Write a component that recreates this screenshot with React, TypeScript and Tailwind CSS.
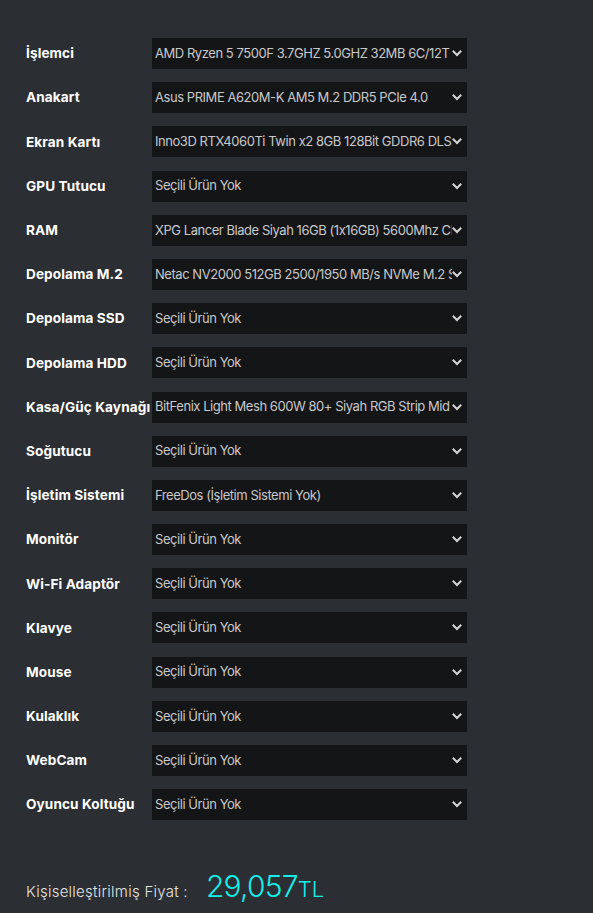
const rows: [string, string][] = [
  ["İşlemci", "AMD Ryzen 5 7500F 3.7GHZ 5.0GHZ 32MB 6C/12T AM5 Tray"],
  ["Anakart", "Asus PRIME A620M-K AM5 M.2 DDR5 PCIe 4.0"],
  ["Ekran Kartı", "Inno3D RTX4060Ti Twin x2 8GB 128Bit GDDR6 DLSS 3"],
  ["GPU Tutucu", "Seçili Ürün Yok"],
  ["RAM", "XPG Lancer Blade Siyah 16GB (1x16GB) 5600Mhz CL46"],
  ["Depolama M.2", "Netac NV2000 512GB 2500/1950 MB/s NVMe M.2 SSD"],
  ["Depolama SSD", "Seçili Ürün Yok"],
  ["Depolama HDD", "Seçili Ürün Yok"],
  ["Kasa/Güç Kaynağı", "BitFenix Light Mesh 600W 80+ Siyah RGB Strip Mid Tower"],
  ["Soğutucu", "Seçili Ürün Yok"],
  ["İşletim Sistemi", "FreeDos (İşletim Sistemi Yok)"],
  ["Monitör", "Seçili Ürün Yok"],
  ["Wi-Fi Adaptör", "Seçili Ürün Yok"],
  ["Klavye", "Seçili Ürün Yok"],
  ["Mouse", "Seçili Ürün Yok"],
  ["Kulaklık", "Seçili Ürün Yok"],
  ["WebCam", "Seçili Ürün Yok"],
  ["Oyuncu Koltuğu", "Seçili Ürün Yok"],
];

function Chevron() {
  return (
    <svg width="10" height="7" viewBox="0 0 10 7" className="shrink-0">
      <path d="M1.5 1.5 L5 5 L8.5 1.5" fill="none" stroke="#d4d4d4" strokeWidth="2" strokeLinecap="square" />
    </svg>
  );
}

function PartRow({ label, value }: { label: string; value: string }) {
  return (
    <div className="flex items-center">
      <div className="w-[126px] shrink-0 text-[13.6px] font-bold text-white whitespace-nowrap tracking-[0.1px]">
        {label}
      </div>
      <div className="flex h-[31px] w-[315px] items-center bg-[#141517] pl-[3px] pr-[5px]">
        <span className="flex-1 overflow-hidden whitespace-nowrap text-[13px] text-[#c9c9c9] tracking-[-0.45px]">
          {value}
        </span>
        <Chevron />
      </div>
    </div>
  );
}

export default function App() {
  return (
    <div
      className="min-h-[913px] w-full bg-[#2b2e33] pl-[26px] pt-[38px]"
      style={{ fontFamily: "Inter, 'Noto Sans', sans-serif" }}
    >
      <div className="flex flex-col gap-[13.2px]">
        {rows.map(([l, v]) => (
          <PartRow key={l} label={l} value={v} />
        ))}
      </div>
      <div className="mt-[51px] flex items-baseline">
        <span className="w-[180px] text-[15px] font-light text-[#e4e4e4] tracking-[0.25px]">
          Kişiselleştirilmiş Fiyat :
        </span>
        <span className="text-[30px] font-light leading-none text-[#14eee8] tracking-[-0.8px]">29,057</span>
        <span className="text-[22px] font-light leading-none text-[#14eee8]">TL</span>
      </div>
    </div>
  );
}
